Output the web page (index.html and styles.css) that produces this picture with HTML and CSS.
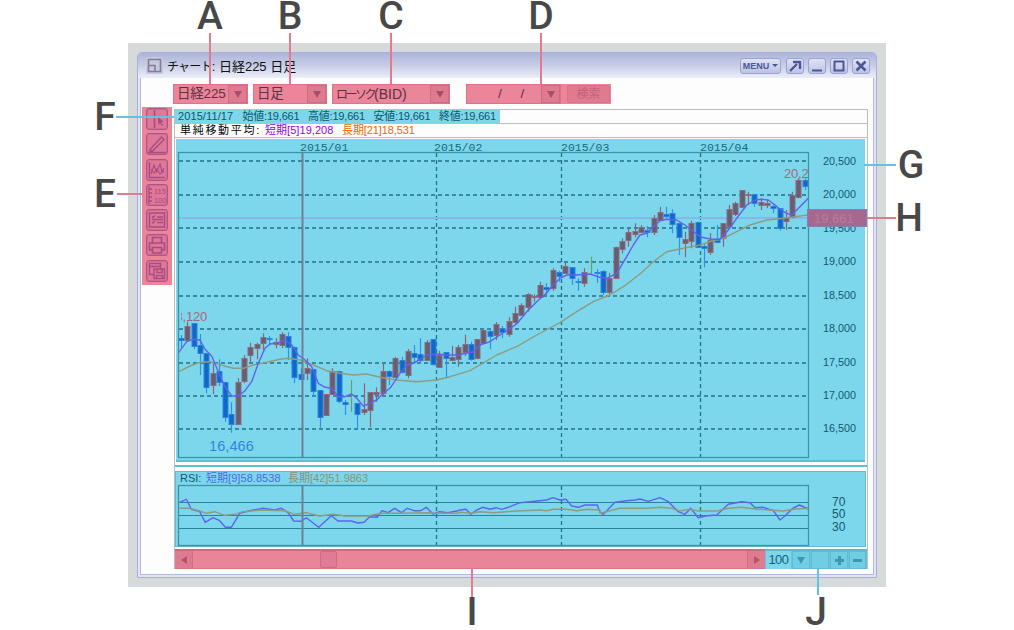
FILE: index.html
```html
<!DOCTYPE html>
<html lang="ja">
<head>
<meta charset="utf-8">
<title>チャート</title>
<link rel="stylesheet" href="styles.css">
</head>
<body>
<div class="stage">
  <div class="frame">
    <div class="window">
      <header class="titlebar">
        <svg class="title-icon" width="17" height="17" viewBox="0 0 17 17"><rect x="0" y="0" width="17" height="17" rx="2" fill="#c5c8e3"/><path d="M2.500 2.500h12v12h-12zM2.500 8.500h6.500v6" fill="none" stroke="#857c90" stroke-width="1.600"/></svg>
        <span class="title-text"><span class="title-kana">チャート</span>: 日経225 日足</span>
        <div class="win-buttons">
          <button class="win-btn menu">MENU<i class="menu-caret"></i></button>
          <button class="win-btn"><svg width="14" height="12" viewBox="0 0 14 12"><path d="M2 11 9 4M5 2h7v7" fill="none" stroke="#4c5798" stroke-width="2.400"/></svg></button>
          <button class="win-btn"><svg width="12" height="12" viewBox="0 0 12 12"><path d="M1 10.500h10" stroke="#4c5798" stroke-width="2"/></svg></button>
          <button class="win-btn"><svg width="12" height="12" viewBox="0 0 12 12"><rect x="1.500" y="1.500" width="9" height="9" fill="none" stroke="#4c5798" stroke-width="2"/></svg></button>
          <button class="win-btn"><svg width="12" height="12" viewBox="0 0 12 12"><path d="M1.500 1.500l9 9M10.500 1.500l-9 9" stroke="#4c5798" stroke-width="2.600"/></svg></button>
        </div>
      </header>
      <div class="client">
        <div class="toolbar">
          <div class="select w-a"><span class="select-text">日経225</span><span class="select-arrow"><i></i></span></div>
          <div class="select w-b"><span class="select-text">日足</span><span class="select-arrow"><i></i></span></div>
          <div class="select w-c"><span class="select-text"><span class="kana">ローソク</span><span class="latin">(BID)</span></span><span class="select-arrow"><i></i></span></div>
          <div class="search-group">
            <div class="select w-d"><span class="select-text date-text">/&nbsp;&nbsp;&nbsp;&nbsp;&nbsp;/</span><span class="select-arrow"><i></i></span></div>
            <div class="search-wrap"><span class="search-btn">検索</span></div>
          </div>
        </div>
        <div class="main">
          <nav class="tools">
            <span class="tool"><svg width="20" height="20" viewBox="0 0 20 20"><path d="M7.500 1v18" stroke="#a84c7e" stroke-width="1.600"/><path d="M11 8v8l2-2 2 3 1-1-2-3h3z" fill="#a84c7e"/></svg></span>
            <span class="tool"><svg width="20" height="20" viewBox="0 0 20 20"><path d="M3 15.500 14.500 3l2.500 2.500L5.500 17H3zM1 18.500h18" fill="none" stroke="#a84c7e" stroke-width="1.400"/></svg></span>
            <span class="tool"><svg width="20" height="20" viewBox="0 0 20 20"><path d="M2.500 2v15.500H18" fill="none" stroke="#a84c7e" stroke-width="1.600"/><path d="M4 14 7 5l2.500 7L13 4l2 8 2-4M4 9l3 4 3-4 3 5 4-3" fill="none" stroke="#a84c7e" stroke-width="1.100"/></svg></span>
            <span class="tool"><svg width="20" height="20" viewBox="0 0 20 20"><path d="M2 1v18M2 4h3M2 8h3M2 12h3M2 16h3" fill="none" stroke="#a84c7e" stroke-width="1.300"/><text x="7" y="9" class="tool-num">115</text><text x="7" y="18" class="tool-num">100</text></svg></span>
            <span class="tool"><svg width="20" height="20" viewBox="0 0 20 20"><path d="M2.500 3h15v14h-15zM5 6.500l1 1 2-2M5 12l1 1 2-2M10 7h6M10 12.500h6M5 9.500h11" fill="none" stroke="#a84c7e" stroke-width="1.400"/></svg></span>
            <span class="tool"><svg width="20" height="20" viewBox="0 0 20 20"><path d="M5.500 8V2.500h9V8M2.500 8h15v7h-3v-2.500h-9V15h-3zM5.500 12.500h9V18h-9z" fill="none" stroke="#a84c7e" stroke-width="1.600"/></svg></span>
            <span class="tool"><svg width="20" height="20" viewBox="0 0 20 20"><path d="M2.500 2.500h11v3h-11zM2.500 5.500v8h4M13.500 5.500v2M7 8h10.500v9.500H7zM10 8v3.500h5V8M9.500 17.500v-3h6v3" fill="none" stroke="#a84c7e" stroke-width="1.400"/></svg></span>
          </nav>
          <section class="panel">
            <div class="info-row first">
              <div class="ohlc">
                <span class="date-item">2015/11/17</span>
                <span class="ohlc-item">始値:19,661</span>
                <span class="ohlc-item">高値:19,661</span>
                <span class="ohlc-item">安値:19,661</span>
                <span class="ohlc-item">終値:19,661</span>
              </div>
            </div>
            <div class="info-row second">
              <span class="ma-title">単純移動平均:</span>
              <span class="ma-short">短期[5]19,208</span>
              <span class="ma-long">長期[21]18,531</span>
            </div>
            <svg id="chart" class="chart" width="692" height="411" viewBox="175 138 692 411">
              <defs>
                <clipPath id="plot-clip"><rect x="179" y="153" width="629" height="304"/></clipPath>
                <clipPath id="label-clip"><rect x="181" y="153" width="627" height="304"/></clipPath>
                <clipPath id="rsi-clip"><rect x="179" y="486" width="629" height="59"/></clipPath>
              </defs>
              <rect x="176" y="139" width="689" height="323" class="bg"/>
              <rect x="175" y="465" width="692" height="2" class="sep"/>
              <rect x="176" y="460" width="689" height="2" class="sep"/>
              <rect x="175.500" y="471.500" width="690" height="75" class="bg panel-edge"/>
              <g class="axis-date">
                <text x="300" y="151">2015/01</text>
                <text x="434" y="151">2015/02</text>
                <text x="561" y="151">2015/03</text>
                <text x="700" y="151">2015/04</text>
              </g>
              <path class="grid" d="M179 161H808M179 195H808M179 228H808M179 262H808M179 296H808M179 329H808M179 363H808M179 396H808M179 429H808M436.500 153V457M561.500 153V457M700.500 153V457"/>
              <path class="cross-h" d="M178 218H808"/>
              <g id="candles" clip-path="url(#plot-clip)"></g>
              <path class="cross-v" d="M302.500 152V457"/>
              <rect x="178.500" y="152.500" width="630" height="305" class="frame-line"/>
              <g clip-path="url(#label-clip)">
                <text x="207" y="321" class="hi-label" text-anchor="end">18,120</text>
                <text x="784" y="178" class="hi-label">20,244</text>
              </g>
              <text x="209" y="451" class="lo-label">16,466</text>
              <g class="axis-price">
                <text x="823" y="165">20,500</text>
                <text x="823" y="198">20,000</text>
                <text x="823" y="232">19,500</text>
                <text x="823" y="265">19,000</text>
                <text x="823" y="299">18,500</text>
                <text x="823" y="332">18,000</text>
                <text x="823" y="366">17,500</text>
                <text x="823" y="399">17,000</text>
                <text x="823" y="432">16,500</text>
              </g>
              <rect x="807.500" y="209.500" width="59" height="17" class="price-tag"/>
              <text x="814" y="223" class="price-tag-text">19,661</text>

              <text x="180" y="482" class="rsi-name">RSI:</text>
              <text x="206" y="482" class="rsi-short">短期[9]58.8538</text>
              <text x="288" y="482" class="rsi-long">長期[42]51.9863</text>
              <path class="rsi-grid" d="M179 502.500H808M179 515.500H808M179 528.500H808"/>
              <path class="grid" d="M436.500 486V545M561.500 486V545M700.500 486V545"/>
              <g id="rsi" clip-path="url(#rsi-clip)"></g>
              <path class="cross-v" d="M302.500 485V545"/>
              <rect x="178.500" y="485.500" width="630" height="60" class="frame-line"/>
              <g class="axis-rsi">
                <text x="832" y="506">70</text>
                <text x="832" y="518">50</text>
                <text x="832" y="531">30</text>
              </g>
            </svg>
            <div class="bottom-bar">
              <div class="scrollbar">
                <span class="scroll-btn"><i class="tri-left"></i></span>
                <div class="scroll-track"><span class="scroll-thumb"></span></div>
                <span class="scroll-btn"><i class="tri-right"></i></span>
              </div>
              <div class="zoombar">
                <span class="zoom-val">100</span>
                <span class="zoom-btn"><i class="tri-down"></i></span>
                <span class="zoom-btn"></span>
                <span class="zoom-btn"><svg width="11" height="11" viewBox="0 0 11 11"><path d="M5.500 1v9M1 5.500h9" stroke="#3a98b0" stroke-width="3"/></svg></span>
                <span class="zoom-btn"><svg width="11" height="11" viewBox="0 0 11 11"><path d="M1 5.500h9" stroke="#3a98b0" stroke-width="3"/></svg></span>
              </div>
            </div>
          </section>
        </div>
      </div>
    </div>
  </div>

  <i class="lead pink lead-a"></i><i class="lead pink lead-b"></i><i class="lead pink lead-c"></i><i class="lead pink lead-d"></i>
  <i class="lead pink lead-e"></i><i class="lead cyan lead-f"></i><i class="lead cyan lead-g"></i><i class="lead pink lead-h"></i>
  <i class="lead pink lead-i"></i><i class="lead cyan lead-j"></i>
  <span class="mark mark-a">A</span><span class="mark mark-b">B</span><span class="mark mark-c">C</span><span class="mark mark-d">D</span>
  <span class="mark mark-e">E</span><span class="mark mark-f">F</span><span class="mark mark-g">G</span><span class="mark mark-h">H</span>
  <span class="mark mark-i">I</span><span class="mark mark-j">J</span>
</div>
<script src="chart.js"></script>
</body>
</html>
```
FILE: styles.css
```css
* { box-sizing: border-box; }
html, body { margin: 0; padding: 0; background: #fff; }
body { font-family: "Liberation Sans", "Noto Sans CJK JP", sans-serif; overflow: hidden; }
i { display: block; }

.stage { position: relative; width: 1014px; height: 630px; padding: 43px 128px 0; }
.frame { width: 758px; height: 544px; padding: 9px; background: #d7dadb; }
.window { width: 740px; height: 526px; border: 1px solid #a8aedc; border-radius: 5px 5px 0 0; background: #e2e4f4; display: flex; flex-direction: column; }

.titlebar { height: 25px; flex: none; display: flex; align-items: center; padding: 0 6px 0 8px; background: linear-gradient(#adb5da, #c8cde6 50%, #eceef8); border-radius: 4px 4px 0 0; }
.title-icon { flex: none; }
.title-text { margin-left: 4px; font-size: 13px; color: #111; }
.title-kana { font-size: 12px; letter-spacing: -.8px; }
.win-buttons { margin-left: auto; display: flex; gap: 4px; }
.win-btn { width: 18px; height: 16px; padding: 0; display: flex; align-items: center; justify-content: center; border: 1px solid #9aa3d4; border-radius: 3px; background: linear-gradient(#dfe2f3, #bcc3e3); }
.win-btn.menu { width: 41px; margin-right: 1px; gap: 3px; font: bold 9px "Liberation Sans", sans-serif; color: #4c5798; }
.menu-caret { width: 0; height: 0; border: 3px solid transparent; border-top: 3px solid #4c5798; border-bottom: 0; }

.client { flex: 1; margin: 0 2px 2px; border: 1px solid #b4b8e0; border-top: 0; background: #fdfdfd; min-height: 0; }

.toolbar { display: flex; gap: 5px; padding: 6px 0 0 32px; height: 26px; }
.select { height: 20px; display: flex; align-items: stretch; justify-content: space-between; background: #eb8599; border: 1px solid #d9748b; color: #5b3342; }
.select-text { font-size: 13.500px; line-height: 18px; padding-left: 3px; white-space: nowrap; letter-spacing: -.2px; }
.kana { font-size: 12px; letter-spacing: -2.500px; }
.latin { font-size: 14px; letter-spacing: 0; }
.select-arrow { width: 19px; display: flex; align-items: center; justify-content: center; background: #de7b91; border: 1px solid #cf6c83; }
.select-arrow i { width: 0; height: 0; border-left: 4px solid transparent; border-right: 4px solid transparent; border-top: 7px solid #a84f67; }
.w-a { width: 75px; }
.w-b { width: 74px; }
.w-c { width: 118px; }
.w-d { width: 95px; }
.date-text { padding-left: 31px; letter-spacing: 0; }
.search-group { display: flex; margin-left: 11px; }
.search-wrap { width: 50px; height: 20px; padding: 1px 1px 1px 6px; background: #eb8599; }
.search-btn { display: block; height: 18px; border-radius: 2px; background: #e07a90; border: 1px solid #d8748a; color: #c4637d; font-size: 12px; line-height: 16px; text-align: center; }

.main { display: flex; align-items: flex-start; padding: 3px 0 0 1px; }
.tools { width: 30px; height: 178px; flex: none; background: #eb8599; display: flex; flex-direction: column; align-items: center; gap: 3.300px; padding-top: 1px; }
.tool { width: 22px; height: 22px; display: flex; align-items: center; justify-content: center; background: #df7898; border: 1px solid #ad5488; border-radius: 3px; box-shadow: inset 0 0 0 1px rgba(173, 84, 136, .3); }
.tool-num { font: 7.500px "Liberation Sans", sans-serif; fill: #a84c7e; }

.panel { width: 694px; margin: 2px 0 0 2px; border: 1px solid #bdbdbd; border-bottom: 0; border-right-width: 1px; }
.info-row { height: 14px; font-size: 11px; line-height: 13px; border-bottom: 1px solid #bdbdbd; white-space: nowrap; }
.info-row.second { display: flex; padding-left: 5px; height: 14px; }
.ohlc { width: 325px; height: 13px; background: #7dd6ea; color: #0d566b; display: flex; gap: 9.500px; padding-left: 3px; }
.ohlc-item { width: 56px; letter-spacing: -.2px; }
.date-item { width: 55px; letter-spacing: .1px; }
.ma-title { width: 85px; letter-spacing: 1.700px; color: #000; font-size: 11px; }
.ma-short { width: 77px; color: #9000f0; letter-spacing: .05px; }
.ma-long { color: #f06800; letter-spacing: -.1px; }

.chart { display: block; }
.bg { fill: #7dd7ec; }
.sep { fill: #63bdd2; }
.panel-edge { stroke: #63bdd2; }
.grid { fill: none; stroke: #1f7389; stroke-width: 1.300; stroke-dasharray: 4 3; }
.rsi-grid { fill: none; stroke: #2a8398; stroke-width: 1.200; }
.frame-line { fill: none; stroke: #3b93a8; stroke-width: 1.300; }
.cross-h { stroke: #85b8e8; stroke-width: 2; fill: none; }
.cross-v { stroke: #6f7f95; stroke-width: 2; fill: none; }
.axis-date text { font: 11.500px "Liberation Mono", monospace; fill: #17687e; }
.axis-price text { font: 10.800px "Liberation Sans", sans-serif; fill: #12596e; }
.axis-rsi text { font: 12px "Liberation Sans", sans-serif; fill: #12596e; }
.hi-label { font: 13px "Liberation Sans", sans-serif; fill: #a36a7a; letter-spacing: -.2px; }
.lo-label { font: 14.500px "Liberation Sans", sans-serif; fill: #2f86e0; letter-spacing: .1px; }
.price-tag { fill: #a6688f; stroke: #7f7fc0; }
.price-tag-text { font: 13px "Liberation Sans", sans-serif; fill: #b47f9d; }
.rsi-name { font: 11px "Liberation Sans", sans-serif; fill: #12596e; }
.rsi-short { font: 11px "Liberation Sans", "Noto Sans CJK JP", sans-serif; fill: #4e66ea; letter-spacing: .05px; }
.rsi-long { font: 11px "Liberation Sans", "Noto Sans CJK JP", sans-serif; fill: #8c9270; }
.wick-up { stroke: #8c6474; stroke-width: 1.200; fill: none; }
.wick-down { stroke: #2f8fea; stroke-width: 1.200; fill: none; }
.wick-doji { stroke: #6c9f62; stroke-width: 1.200; fill: none; }
.body-up { fill: #665f72; stroke: #8f6b80; }
.body-down { fill: #1268c8; stroke: #2a86de; }
.ma-s { fill: none; stroke: #5f62f0; stroke-width: 1.400; stroke-linejoin: round; }
.ma-l { fill: none; stroke: #8f9b80; stroke-width: 1.400; stroke-linejoin: round; }

.bottom-bar { display: flex; height: 20px; }
.scrollbar { width: 590px; display: flex; background: #e98599; border-top: 2px solid #cf6b80; border-bottom: 1px solid #d4768a; }
.scroll-btn { width: 18px; flex: none; display: flex; align-items: center; justify-content: center; background: #de7b91; border-right: 1px solid #d16d84; }
.scroll-btn:last-child { border-right: 0; border-left: 1px solid #d16d84; }
.scroll-track { flex: 1; padding-left: 127px; }
.scroll-thumb { display: block; width: 17px; height: 17px; background: #df7b92; border: 1px solid #cf6b83; border-radius: 2px; }
.tri-left { width: 0; height: 0; border-top: 4px solid transparent; border-bottom: 4px solid transparent; border-right: 6px solid #b0536b; }
.tri-right { width: 0; height: 0; border-top: 4px solid transparent; border-bottom: 4px solid transparent; border-left: 6px solid #b0536b; }
.zoombar { width: 102px; display: flex; gap: 1px; padding: 0 1px; background: #66c4dc; border-top: 2px solid #5ab8d0; }
.zoom-val { width: 25px; text-align: center; font: 13px/17px "Liberation Sans", sans-serif; letter-spacing: -.5px; color: #14627a; background: #7dd6ea; }
.zoom-btn { width: 18px; display: flex; align-items: center; justify-content: center; background: #71cde3; border: 1px solid #5fbcd4; }
.zoom-btn:last-child { width: 17px; }
.tri-down { width: 0; height: 0; border-left: 4.500px solid transparent; border-right: 4.500px solid transparent; border-top: 7px solid #3a98b0; }

.lead { position: absolute; }
.pink { background: #e4798f; }
.cyan { background: #62c4dc; }
.lead-a { left: 209px; top: 33px; width: 2px; height: 51px; }
.lead-b { left: 289px; top: 33px; width: 2px; height: 51px; }
.lead-c { left: 390px; top: 33px; width: 2px; height: 51px; }
.lead-d { left: 540px; top: 33px; width: 2px; height: 51px; }
.lead-e { left: 117px; top: 193px; width: 25px; height: 2px; }
.lead-f { left: 116px; top: 116px; width: 58px; height: 2px; }
.lead-g { left: 864px; top: 164px; width: 32px; height: 2px; }
.lead-h { left: 867px; top: 217px; width: 29px; height: 2px; }
.lead-i { left: 471px; top: 569px; width: 2px; height: 31px; }
.lead-j { left: 817px; top: 569px; width: 2px; height: 26px; }

.mark { position: absolute; width: 40px; text-align: center; font: 500 39px/29px Roboto, sans-serif; color: #484848; }
.mark-a { left: 190px; top: 2px; }
.mark-b { left: 270px; top: 2px; }
.mark-c { left: 371px; top: 2px; }
.mark-d { left: 521px; top: 2px; }
.mark-e { left: 85px; top: 180px; }
.mark-f { left: 85px; top: 103px; }
.mark-g { left: 891px; top: 151px; }
.mark-h { left: 889px; top: 204px; }
.mark-i { left: 452px; top: 598px; }
.mark-j { left: 796px; top: 598px; }
```
FILE: chart.js
```js
(function () {
  var NS = 'http://www.w3.org/2000/svg';
  function add(parent, tag, attrs) {
    var el = document.createElementNS(NS, tag);
    for (var k in attrs) el.setAttribute(k, attrs[k]);
    parent.appendChild(el);
    return el;
  }

  /* Candles: type (u up, d down, g doji), body top, body bottom, wick top, wick bottom */
  var segments = [
    { base: 300, rows: [
      ['d',113,120,105,145],['u',77,120,65,125],['d',70,140,70,148],['d',135,158,102,225],['d',160,262,160,280],
      ['u',218,255,190,282],['d',214,247,178,258],['d',245,350,245,365],['d',342,372,307,398],['u',245,372,235,372],
      ['u',173,243,165,250],['u',142,167,128,190],['u',132,144,128,178],['u',110,127,100,150],['d',115,119,108,135],
      ['u',127,132,115,145],['u',103,137,97,145],['d',108,140,97,180],['d',140,230,140,250],['d',222,237,205,240],
      ['u',205,219,175,240],['d',207,272,207,290],['d',270,350,270,383],['u',283,347,283,347],['u',212,282,205,285],
      ['d',212,303,212,310],['d',307,312,300,345],['g',299,301,240,335],['d',308,340,308,387],['u',328,338,250,345],
      ['u',277,330,277,382],['u',276,281,262,305],['u',212,278,190,290],['d',213,228,210,255],['u',173,230,170,235]
    ]},
    { base: 200, rows: [
      ['d',480,516,470,520],['u',452,525,447,535],['d',460,472,435,490],['d',463,480,415,490],['u',425,478,420,480],
      ['d',418,494,418,497],['u',465,502,452,502],['d',456,474,456,535],['u',470,478,438,484],['u',441,478,435,500],
      ['u',432,455,404,468],['d',432,478,425,482],['u',417,474,417,478],['u',390,428,388,430],['d',394,410,390,448],
      ['u',372,406,366,420],['d',384,396,378,415],['u',362,402,352,410],['u',340,368,320,375],['u',314,344,310,348],
      ['u',283,323,280,335],['u',288,291,283,305],['u',256,292,245,295],['d',260,265,250,285],['u',211,266,205,272],
      ['d',215,227,212,245],['u',198,219,188,222],['d',202,235,202,255],['d',242,246,235,272],['u',215,247,205,260],
      ['g',217,219,170,222],['d',215,219,208,248],['d',212,274,210,285],['u',235,278,218,282],['u',140,233,140,235],
      ['u',122,146,115,160],['u',97,122,85,140],['u',92,102,70,112]
    ]},
    { base: 150, rows: [
      ['u',230,245,225,250],['d',240,245,228,262],['u',204,245,195,255],['u',185,210,170,212],['d',193,198,170,205],
      ['d',188,222,178,250],['d',218,260,218,315],['u',268,280,245,322],['u',220,275,212,295],['d',215,290,215,292],
      ['d',287,293,280,352],['u',270,305,250,315],['d',270,275,225,280],['u',220,265,220,290],['u',178,230,165,235],
      ['u',160,193,155,198],['u',120,170,120,172],['u',131,135,125,165],['d',133,160,133,170],['u',155,165,145,180],
      ['u',160,165,150,175],['d',167,172,160,190],['d',175,235,175,242],['u',200,212,180,240],['u',135,200,125,205],
      ['u',90,142,85,145],['d',90,107,85,120]
    ]}
  ];

  var candles = document.getElementById('candles');
  var wicks = { u: '', d: '', g: '' };
  var bodies = [];
  var index = 0;
  segments.forEach(function (seg) {
    seg.rows.forEach(function (r) {
      var x = Math.round(181 + 6.3 * index) + 0.5;
      var y = function (z) { return seg.base + z / 3; };
      wicks[r[0]] += 'M' + x + ' ' + y(r[3]).toFixed(1) + 'V' + y(r[4]).toFixed(1);
      bodies.push({ t: r[0], x: x, top: Math.round(y(r[1])) + 0.5, h: Math.max(1, Math.round((r[2] - r[1]) / 3)) });
      index++;
    });
  });
  add(candles, 'path', { d: wicks.u, 'class': 'wick-up' });
  add(candles, 'path', { d: wicks.d, 'class': 'wick-down' });
  add(candles, 'path', { d: wicks.g, 'class': 'wick-doji' });
  bodies.forEach(function (b) {
    if (b.t === 'g') return;
    add(candles, 'rect', { x: b.x - 2.5, y: b.top, width: 5, height: b.h, 'class': b.t === 'u' ? 'body-up' : 'body-down' });
  });

  /* Lines, given as x, y pairs in zoomed crops: x0 + zx / 3, y0 + zy / 3 */
  function line(parts) {
    var pts = [];
    parts.forEach(function (p) {
      for (var i = 0; i < p.z.length; i += 2) {
        pts.push((p.x + p.z[i] / 3).toFixed(1) + ',' + (p.y + p.z[i + 1] / 3).toFixed(1));
      }
    });
    return pts.join(' ');
  }

  add(candles, 'polyline', { 'class': 'ma-l', points: line([
    { x: 170, y: 300, z: [20,218,60,198,90,187,120,185,160,197,190,205,220,205,250,195,290,187,330,178,355,175,390,180,430,195,470,212,510,220,550,225,590,222,630,232,680,240] },
    { x: 400, y: 200, z: [50,545,110,540,150,530,210,512,290,465,350,440,410,405,480,368,530,335,580,305,630,285,670,260] },
    { x: 640, y: 150, z: [0,372,40,335,80,305,130,295,180,285,220,272,250,265,290,245,330,225,380,210,430,205,505,195] }
  ]) });
  add(candles, 'polyline', { 'class': 'ma-s', points: line([
    { x: 170, y: 300, z: [20,165,28,155,50,125,70,118,90,120,105,148,125,168,145,215,165,260,185,288,205,288,225,272,245,245,265,190,285,145,300,132,325,128,345,120,365,135,385,165,405,180,425,200,445,250,465,262,485,265,505,290,525,290,545,282,560,295,580,318,600,310,620,300,640,280,660,265,680,235] },
    { x: 400, y: 200, z: [0,520,20,495,40,490,60,478,80,465,110,462,140,465,170,465,200,460,220,455,240,435,270,425,300,405,330,385,350,372,380,335,410,305,440,278,460,255,480,235,500,225,530,225,570,222,600,232,620,235,650,220,680,170,700,135] },
    { x: 640, y: 150, z: [0,255,20,250,40,230,60,212,80,208,110,210,135,225,160,245,185,262,215,268,240,268,265,240,290,205,320,165,345,150,365,148,385,150,405,165,420,178,440,190,455,195,480,170,505,145] }
  ]) });

  var rsi = document.getElementById('rsi');
  add(rsi, 'polyline', { 'class': 'ma-s', points: line([
    { x: 128, y: 450, z: [155,157,175,148,190,178,215,185,232,217,255,203,275,212,292,232,310,232,335,190,365,182,405,175,440,180,460,175,480,187,497,213,520,214,535,203,572,232,610,197,630,213,670,213,690,219,708,217,725,200,748,202,762,182,780,188,800,175,820,188,838,175,858,182,878,182,895,172,915,192,935,185,960,188,990,182] },
    { x: 460, y: 480, z: [0,90,18,88,32,103,50,90,68,82,90,88,108,83,125,88,150,80,180,68,210,65,260,60,278,53,300,60,318,58,335,78,355,82,375,75,412,75] },
    { x: 600, y: 450, z: [0,187,10,193,45,157,80,152,105,150,120,147,145,154,180,143,205,155,235,185,255,193,272,175,295,203,320,197,350,195,385,163,425,155,450,158,465,173,490,172,520,182,540,210,555,198,578,175,598,165,625,177] }
  ]) });
  add(rsi, 'polyline', { 'class': 'ma-l', points: line([
    { x: 128, y: 450, z: [155,175,185,175,215,183,235,190,260,185,290,196,320,193,345,185,400,180,470,182,500,193,535,188,575,198,615,193,650,198,720,198,760,190,820,190,900,188,930,190,990,190] },
    { x: 460, y: 480, z: [0,97,30,100,60,95,100,98,170,93,240,90,260,92,280,88,320,88,350,92,380,88,420,90] },
    { x: 600, y: 450, z: [0,190,30,182,60,175,140,175,180,172,215,175,240,183,270,178,295,183,350,183,385,175,425,172,465,177,510,180,550,183,580,178,625,175] }
  ]) });
})();
```
